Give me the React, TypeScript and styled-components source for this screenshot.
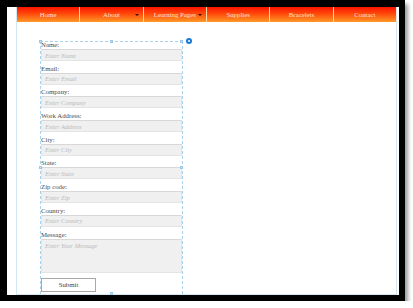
import styled, { createGlobalStyle } from "styled-components";

const GlobalStyle = createGlobalStyle`
  html, body {
    margin: 0;
    padding: 0;
    background: #ffffff;
  }
  body {
    font-family: "Liberation Serif", "DejaVu Serif", serif;
  }
`;

const Frame = styled.div`
  box-sizing: border-box;
  width: 405px;
  height: 301px;
  padding: 7px 6px 6px 7px;
  background: #000;
  box-shadow: 3px 4px 4px rgba(0, 0, 0, 0.4);
`;

const Page = styled.div`
  box-sizing: border-box;
  height: 100%;
  background: #fff;
  padding: 0 2px 0 9px;
`;

const Container = styled.div`
  box-sizing: border-box;
  height: 100%;
  border-left: 1px solid #d3e6f3;
  border-right: 1px solid #d3e6f3;
  border-bottom: 1px solid #d3e6f3;
  display: flex;
  flex-direction: column;
`;

const NavBar = styled.nav`
  display: flex;
  height: 15px;
  background: linear-gradient(to bottom, #ff1200 0%, #ff4a0a 45%, #ff9a28 100%);
`;

const NavItem = styled.div<{ $last?: boolean }>`
  position: relative;
  flex: 1;
  display: flex;
  align-items: center;
  justify-content: center;
  font-size: 6.8px;
  color: #fbe2d6;
  border-right: ${(p) => (p.$last ? "none" : "1px solid #ffd9a8")};
`;

const Arrow = styled.span`
  position: absolute;
  right: 4px;
  top: 7px;
  width: 0;
  height: 0;
  border-left: 2px solid transparent;
  border-right: 2px solid transparent;
  border-top: 2px solid #2a0a00;
`;

const FormArea = styled.form`
  position: relative;
  box-sizing: border-box;
  width: 143px;
  margin: 19px 0 0 23px;
  flex: 1;
  border: 1px dashed #a9d2ee;
  border-bottom: none;
  display: flex;
  flex-direction: column;
`;

const Handle = styled.span<{ $x: string; $y: string }>`
  position: absolute;
  left: ${(p) => p.$x};
  top: ${(p) => p.$y};
  width: 3px;
  height: 3px;
  margin: -2px 0 0 -2px;
  background: #cfe5f5;
  border: 0.5px solid #9ac8e8;
  box-sizing: border-box;
`;

const Anchor = styled.span`
  position: absolute;
  left: 4px;
  top: -4px;
  margin-left: 100%;
  width: 6px;
  height: 6px;
  border-radius: 50%;
  background: #1a78d6;
  display: flex;
  align-items: center;
  justify-content: center;
  &::after {
    content: "";
    width: 2px;
    height: 2px;
    border-radius: 50%;
    background: #fff;
  }
`;

const Field = styled.div<{ $first?: boolean }>`
  display: flex;
  flex-direction: column;
  margin-top: ${(p) => (p.$first ? "-1px" : "3.7px")};
`;

const Label = styled.label`
  font-size: 6.8px;
  line-height: 8px;
  color: #4a4a4a;
`;

const inputCss = `
  box-sizing: border-box;
  width: 100%;
  margin: 0;
  background: #f0f0f0;
  border: 1px solid #e4e4e4;
  border-top-color: #d8d8d8;
  font-family: "Liberation Serif", "DejaVu Serif", serif;
  font-size: 6.5px;
  font-style: italic;
  color: #555;
  padding: 0 3px;
  outline: none;
  &::placeholder {
    color: #bababa;
  }
`;

const Input = styled.input`
  ${inputCss}
  height: 12px;
`;

const TextArea = styled.textarea`
  ${inputCss}
  height: 34px;
  padding-top: 2px;
  resize: none;
`;

const SubmitButton = styled.button`
  box-sizing: border-box;
  margin-top: 5px;
  width: 55px;
  height: 14px;
  background: #fff;
  border: 1px solid #a8a8a8;
  font-family: "Liberation Serif", "DejaVu Serif", serif;
  font-size: 6.8px;
  color: #444;
  padding: 0;
`;

const navItems = [
  { label: "Home" },
  { label: "About", arrow: true },
  { label: "Learning Pages", arrow: true },
  { label: "Supplies" },
  { label: "Bracelets" },
  { label: "Contact" },
];

const fields = [
  { label: "Name:", placeholder: "Enter Name" },
  { label: "Email:", placeholder: "Enter Email" },
  { label: "Company:", placeholder: "Enter Company" },
  { label: "Work Address:", placeholder: "Enter Address" },
  { label: "City:", placeholder: "Enter City" },
  { label: "State:", placeholder: "Enter State" },
  { label: "Zip code:", placeholder: "Enter Zip" },
  { label: "Country:", placeholder: "Enter Country" },
];

export default function App() {
  return (
    <>
      <GlobalStyle />
      <Frame>
        <Page>
          <Container>
            <NavBar>
              {navItems.map((item, i) => (
                <NavItem key={item.label} $last={i === navItems.length - 1}>
                  {item.label}
                  {item.arrow && <Arrow />}
                </NavItem>
              ))}
            </NavBar>

            <FormArea onSubmit={(e) => e.preventDefault()}>
              <Handle $x="0" $y="0" />
              <Handle $x="50%" $y="0" />
              <Handle $x="100%" $y="0" />
              <Handle $x="0" $y="50%" />
              <Handle $x="100%" $y="50%" />
              <Handle $x="50%" $y="100%" />
              <Anchor />

              {fields.map((f, i) => (
                <Field key={f.label} $first={i === 0}>
                  <Label>{f.label}</Label>
                  <Input placeholder={f.placeholder} />
                </Field>
              ))}
              <Field>
                <Label>Message:</Label>
                <TextArea placeholder="Enter Your Message" />
              </Field>
              <SubmitButton type="submit">Submit</SubmitButton>
            </FormArea>
          </Container>
        </Page>
      </Frame>
    </>
  );
}
